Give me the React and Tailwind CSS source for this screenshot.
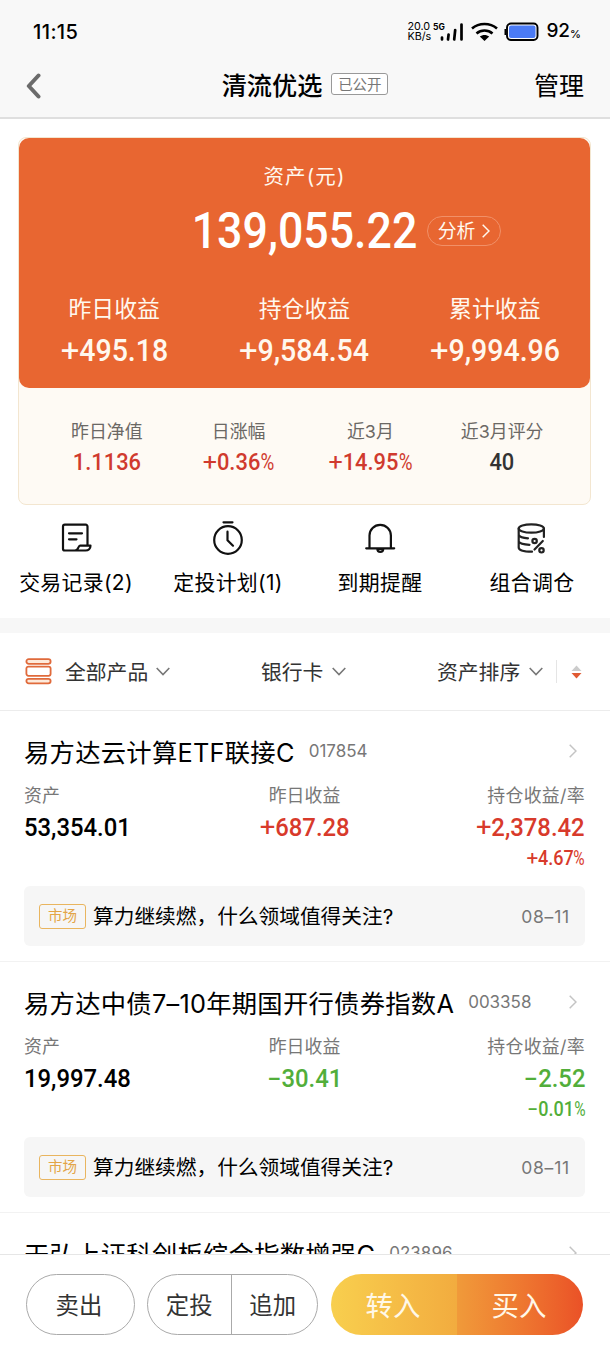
const cjk = "font-['Inter','Noto_Sans_CJK_SC',sans-serif]";

const summary = [
  { label: "昨日收益", value: "+495.18" },
  { label: "持仓收益", value: "+9,584.54" },
  { label: "累计收益", value: "+9,994.96" },
];

const metrics = [
  { label: "昨日净值", value: "1.1136", color: "text-[#d03a2e]" },
  { label: "日涨幅", value: "+0.36", pct: true, color: "text-[#d03a2e]" },
  { label: "近3月", value: "+14.95", pct: true, color: "text-[#d03a2e]" },
  { label: "近3月评分", value: "40", color: "text-[#333]" },
];

const actions = [
  { label: "交易记录(2)", icon: RecordIcon },
  { label: "定投计划(1)", icon: TimerIcon },
  { label: "到期提醒", icon: BellIcon },
  { label: "组合调仓", icon: CoinsIcon },
];

const funds = [
  {
    name: "易方达云计算ETF联接C",
    code: "017854",
    asset: "53,354.01",
    day: "+687.28",
    hold: "+2,378.42",
    rate: "+4.67",
    color: "text-[#d83a2b]",
  },
  {
    name: "易方达中债7–10年期国开行债券指数A",
    code: "003358",
    asset: "19,997.48",
    day: "-30.41",
    hold: "-2.52",
    rate: "-0.01",
    color: "text-[#52ae3a]",
  },
  // last one only peeks out above the bottom bar
  { name: "天弘上证科创板综合指数增强C", code: "023896" },
];

/* ── Icons ── */
function RecordIcon() {
  return (
    <svg width="32" height="32" viewBox="0 0 32 32" fill="none" stroke="#111" strokeWidth="2.200" strokeLinecap="round" strokeLinejoin="round">
      <path d="M27.500 23.500V4.500a1.800 1.800 0 0 0-1.800-1.800H4.800A1.800 1.800 0 0 0 3 4.500v22.200a1.800 1.800 0 0 0 1.800 1.800H25.500c3 0 5-2 5-4.800H20c-1.800 0-1.600 4.700-4.500 4.700" />
      <path d="M9 11.300h13M9 17.300h7.500" />
    </svg>
  );
}

function TimerIcon() {
  return (
    <svg width="32" height="36" viewBox="0 0 32 36" fill="none" stroke="#111" strokeWidth="2.200" strokeLinecap="round" strokeLinejoin="round">
      <circle cx="16" cy="20" r="13.800" />
      <path d="M11.500 2.300h9M15.500 11.700v8.500l5.500 5.500" />
    </svg>
  );
}

function BellIcon() {
  return (
    <svg width="32" height="32" viewBox="0 0 32 32" fill="none" stroke="#111" strokeWidth="2.200" strokeLinecap="round" strokeLinejoin="round">
      <path d="M5.500 26V13.500a10.700 10.700 0 0 1 21.400 0V26M2.200 26.300h28" />
      <path d="M13.400 27a2.900 2.900 0 0 0 5.800 0z" />
    </svg>
  );
}

function CoinsIcon() {
  return (
    <svg width="32" height="32" viewBox="0 0 32 32" fill="none" stroke="#222" strokeWidth="2.200" strokeLinecap="round">
      <ellipse cx="15.300" cy="6.500" rx="12.600" ry="4.200" />
      <path d="M2.700 6.500v19c0 2.600 5 4.200 13.300 4.200M27.900 6.500v8.500M2.700 13c1 2 4.800 3 9.300 3.300M2.700 19.500c1 2 4.800 3 10.800 3.300" />
      <path d="M26.800 19 18.500 27.500" />
      <circle cx="18.600" cy="19" r="2.200" />
      <circle cx="25.500" cy="28.300" r="2.200" />
    </svg>
  );
}

function ChevronRight({ className }) {
  return (
    <svg className={className} viewBox="0 0 8 14" fill="none" stroke="currentColor" strokeWidth="1.500">
      <path d="m.7.7 6.300 6.300-6.300 6.300" />
    </svg>
  );
}

function ChevronDown() {
  return (
    <svg className="w-[14px] h-[9px] text-[#777]" viewBox="0 0 14 9" fill="none" stroke="currentColor" strokeWidth="1.600">
      <path d="m.7 1 6.300 6.500L13.300 1" />
    </svg>
  );
}

/* Condensed figures used for every amount; the sign is drawn wider and lighter */
function Num({ children, pct, className = "" }) {
  const sign = /^[+-]/.test(children) ? children[0] : "";
  return (
    <span className={`inline-flex items-baseline font-['Roboto',sans-serif] font-medium whitespace-nowrap scale-x-[0.9] ${className}`}>
      {sign === "+" && <span className="inline-block w-[0.64em] text-center font-normal scale-x-[1.15]">+</span>}
      {sign === "-" && <span className="inline-block w-[0.6em] text-center scale-x-[1.7] scale-y-[0.9]">-</span>}
      <span>{children.slice(sign.length)}</span>
      {pct && <span className="inline-block w-[0.63em] font-normal scale-x-[0.86] origin-left">%</span>}
    </span>
  );
}

function StatusBar() {
  return (
    <div className="h-[63px] shrink-0 pl-[33px] pr-[29px] flex items-center justify-between text-black">
      <span className="text-[20px] font-medium tracking-[0.4px]">11:15</span>
      <div className="flex items-center">
        <div className="w-[26px] text-[10.800px] leading-[10px] pt-px">
          <div>20.0</div>
          <div>KB/s</div>
        </div>
        <svg width="31" height="22" viewBox="0 0 31 22" className="mr-[7px]">
          <text x="0" y="8.500" fontSize="8.500" fontWeight="700" fontFamily="Inter">5G</text>
          <g stroke="#000" strokeWidth="2.700" strokeLinecap="round">
            <path d="M9 18.500v-2M15 18.500l.6-5M21.200 18.500l1-9.500M28.500 18.500V3.500" />
          </g>
        </svg>
        <svg width="27" height="20" viewBox="0 0 27 20" fill="none" stroke="#000" strokeWidth="2.600" className="mr-[6px]">
          <path d="M1 6.500c7-6 18-6 25 0M5.500 11.500c4.500-4 11.500-4 16 0" />
          <path d="M8.800 14.600c2.600-2.200 6.800-2.200 9.400 0L13.500 19z" fill="#000" stroke="none" />
        </svg>
        <svg width="35" height="20" viewBox="0 0 35 20" className="mr-[7px]">
          <path d="M1.300 7v6" stroke="#000" strokeWidth="1.600" />
          <rect x="3" y="1.500" width="30.500" height="16.500" rx="4" fill="#fff" stroke="#000" strokeWidth="1.900" />
          <rect x="5" y="3.500" width="26.500" height="12.500" rx="2" fill="#4b7bf5" />
        </svg>
        <span className="text-[19px] font-medium">92</span>
        <span className="text-[11px] font-medium pt-[5px]">%</span>
      </div>
    </div>
  );
}

function Header() {
  return (
    <header className="h-[119px] shrink-0 bg-[#f8f8f8] border-b-2 border-[#dfdfdf] flex flex-col">
      <StatusBar />
      <div className="h-[45px] px-[26px] grid grid-cols-[1fr_auto_1fr] items-center">
        <svg width="16" height="26" viewBox="0 0 16 26" fill="none" stroke="#6b6b6b" strokeWidth="4" strokeLinecap="round" strokeLinejoin="round">
          <path d="M12.500 2.500 2.800 13l9.700 10.500" />
        </svg>
        <div className="flex items-center gap-[9px]">
          <h1 className="pt-[2px] text-[25.200px] font-medium text-black">清流优选</h1>
          <span className="w-[57px] h-[22px] -mt-[2px] flex items-center justify-center rounded-[3px] border border-[#999] bg-white text-[14.500px] text-[#777]">
            已公开
          </span>
        </div>
        <span className="pt-[2px] text-right text-[25px] text-black">管理</span>
      </div>
    </header>
  );
}

function AssetCard() {
  return (
    <section className="mt-[18px] ml-[18px] mr-[19px] h-[368px] shrink-0 rounded-[8px] border border-[#f3e6d0] bg-[#fefaf4]">
      <div className="h-[250px] rounded-[10px] bg-[#e86631] text-[#fff8ee]">
        <div className="pt-[23px] h-[54px] leading-[32px] text-center text-[20.500px] tracking-[1.1px]">资产(元)</div>
        <div className="h-[78px] pl-[160px] flex items-center">
          <Num className="w-[251px] justify-center text-[50.500px] text-white scale-x-[0.885]">139,055.22</Num>
          <span className="-ml-[3px] w-[74px] h-[30px] rounded-full border border-[#f19068] flex items-center justify-center gap-[7px] text-[18.800px]">
            <span className="pt-[2px]">分析</span>
            <ChevronRight className="w-[8px] h-[14px]" />
          </span>
        </div>
        <div className="grid grid-cols-3 pt-[23px]">
          {summary.map((s) => (
            <div key={s.label} className="flex flex-col items-center">
              <span className="h-[31px] leading-[32px] text-[22.900px]">{s.label}</span>
              <Num className="h-[52px] leading-[54px] text-[31.700px]">{s.value}</Num>
            </div>
          ))}
        </div>
      </div>
      <div className="grid grid-cols-4 px-[22px] pt-[29px]">
        {metrics.map((m) => (
          <div key={m.label} className="flex flex-col items-center">
            <span className="h-[29px] leading-[30px] text-[17.900px] text-[#6b6864]">{m.label}</span>
            <Num pct={m.pct} className={`h-[30px] leading-[31px] text-[24.300px] ${m.color}`}>{m.value}</Num>
          </div>
        ))}
      </div>
    </section>
  );
}

function Actions() {
  return (
    <nav className="h-[113px] shrink-0 pt-[14px] pr-[2px] grid grid-cols-4 text-[20.900px] text-black">
      {actions.map(({ label, icon: Icon }) => (
        <div key={label} className="flex flex-col items-center">
          <span className="h-[38px] flex items-center">
            <Icon />
          </span>
          <span className="h-[46px] leading-[52px] tracking-[0.3px] whitespace-nowrap">{label}</span>
        </div>
      ))}
    </nav>
  );
}

function Filters() {
  return (
    <div className="h-[93px] shrink-0 border-t-[15px] border-[#f7f7f7]">
      <div className="h-[78px] pl-[25px] pr-[28px] border-b border-[#ececec] flex items-center text-[20.800px] text-[#333]">
        <svg width="27" height="27" viewBox="0 0 27 27" fill="#fdeadb" stroke="#e06a3b" strokeWidth="1.800" className="mr-[13px]">
          <rect x="1.400" y="1.200" width="24.200" height="4.600" rx="2.300" />
          <rect x="1.400" y="8.600" width="24.200" height="9.200" rx="2" fill="#fff" />
          <rect x="1.400" y="20.800" width="24.200" height="4.600" rx="2.300" />
        </svg>
        <span className="w-[91px] pt-[3px]">全部产品</span>
        <ChevronDown />
        <span className="ml-[91px] w-[71px] pt-[3px]">银行卡</span>
        <ChevronDown />
        <span className="ml-[91px] w-[92px] pt-[3px]">资产排序</span>
        <ChevronDown />
        <span className="ml-[13px] w-px h-[23px] bg-[#e5e5e5]" />
        <svg width="11" height="14" viewBox="0 0 11 14" className="ml-auto">
          <path d="M5.500.5 10.500 6H.5z" fill="#ccc" />
          <path d="M.5 8h10l-5 5.500z" fill="#e05a33" />
        </svg>
      </div>
    </div>
  );
}

function FundTitle({ fund }) {
  return (
    <div className="h-[80px] pr-[8px] flex items-center">
      <h2 className="pt-[3px] text-[25.300px] tracking-[0.28px] text-black whitespace-nowrap">{fund.name}</h2>
      <span className="ml-[14px] pt-px text-[17px] text-[#777]">{fund.code}</span>
      <ChevronRight className="ml-auto w-[8px] h-[14px] text-[#c4c4c4]" />
    </div>
  );
}

function Fund({ fund }) {
  if (!fund.asset) {
    return (
      <article className="pl-[24px] pr-[25px]">
        <FundTitle fund={fund} />
      </article>
    );
  }
  return (
    <article className="h-[251px] pl-[24px] pr-[25px] border-b border-[#f2f2f2]">
      <FundTitle fund={fund} />
      <div className="grid grid-cols-3 h-[95px] -mt-[11px] text-[17.900px] text-[#777]">
        <div className="flex flex-col items-start">
          <span className="h-[30px] leading-[32px]">资产</span>
          <Num className="h-[34px] leading-[34px] text-[26.500px] text-black origin-left">{fund.asset}</Num>
        </div>
        <div className="flex flex-col items-center">
          <span className="h-[30px] leading-[32px]">昨日收益</span>
          <Num className={`h-[34px] leading-[34px] text-[26.500px] ${fund.color}`}>{fund.day}</Num>
        </div>
        <div className="flex flex-col items-end">
          <span className="h-[30px] leading-[32px] tracking-[0.3px]">持仓收益/率</span>
          <Num className={`h-[34px] leading-[34px] text-[26.500px] origin-right ${fund.color}`}>{fund.hold}</Num>
          <Num pct className={`h-[28px] leading-[28px] text-[20px] origin-right ${fund.color}`}>{fund.rate}</Num>
        </div>
      </div>
      <div className="mt-[11px] h-[60px] px-[15px] rounded-[6px] bg-[#f6f6f6] flex items-center">
        <span className="w-[47px] h-[25px] rounded-[3px] border border-[#e9b55f] flex items-center justify-center text-[14.500px] text-[#e3a547]">
          市场
        </span>
        <span className="ml-[7px] pt-[2px] text-[20.700px] text-black whitespace-nowrap">算力继续燃，什么领域值得关注?</span>
        <span className="ml-auto pt-[2px] text-[17.500px] tracking-[0.8px] text-[#777]">08–11</span>
      </div>
    </article>
  );
}

function BottomBar() {
  return (
    <footer className="h-[102px] shrink-0 px-[26px] pt-[19px] border-t border-[#e6e6e6] bg-white flex text-[23.400px] text-[#333]">
      <button className="w-[109px] h-[61px] pt-[3px] pr-[3px] rounded-full border border-[#aaa]">卖出</button>
      <div className="ml-[12px] w-[171px] h-[61px] rounded-full border border-[#aaa] flex">
        <button className="flex-1 pt-[3px] border-r border-[#aaa]">定投</button>
        <button className="flex-1 pt-[3px] pr-[3px]">追加</button>
      </div>
      <div className="ml-[13px] w-[252px] h-[61px] rounded-full overflow-hidden flex text-[27.400px] text-[#fff8e8]">
        <button className="flex-1 pt-[4px] pr-[2px] bg-linear-to-r from-[#f8cf4e] to-[#f2ac3f]">转入</button>
        <button className="flex-1 pt-[4px] pr-[2px] bg-linear-to-r from-[#f09a3a] to-[#ea5127]">买入</button>
      </div>
    </footer>
  );
}

export default function App() {
  return (
    <div className={`w-[610px] h-[1356px] overflow-hidden bg-white flex flex-col ${cjk}`}>
      <Header />
      <AssetCard />
      <Actions />
      <Filters />
      <main className="flex-1 min-h-0 overflow-hidden">
        {funds.map((f) => (
          <Fund key={f.code} fund={f} />
        ))}
      </main>
      <BottomBar />
    </div>
  );
}
